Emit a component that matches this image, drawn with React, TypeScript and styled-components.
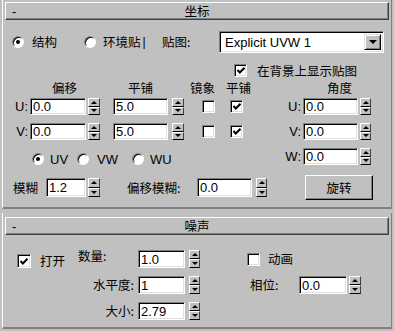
import React from 'react';
import styled, {createGlobalStyle} from 'styled-components';

const GlobalStyle = createGlobalStyle`
    html, body {
        margin: 0;
        padding: 0;
        background: #c0c0c0;
    }
    body {
        width: 394px;
        height: 331px;
        overflow: hidden;
        font-family: "Liberation Sans", "Noto Sans CJK SC", sans-serif;
        font-size: 13px;
        color: #000;
    }
`

const Page = styled.div`
    width: 394px;
    height: 331px;
    padding: 0 2px;
    box-sizing: border-box;
    display: flex;
    flex-direction: column;
`

const Rollout = styled.section<{ $top: number, $gap?: number }>`
    margin-top: ${({$gap}) => $gap || 0}px;
    padding-top: ${({$top}) => $top}px;
    border-left: 1px solid #fff;
    border-right: 1px solid #808080;
    border-bottom: 2px solid #808080;
`

const Header = styled.div`
    margin: 0 2px;
    height: 18px;
    box-sizing: border-box;
    display: grid;
    grid-template-columns: 1fr auto 1fr;
    align-items: center;
    border-top: 1px solid #fff;
    border-left: 1px solid #fff;
    border-right: 1px solid #404040;
    border-bottom: 1px solid #404040;
    box-shadow: inset -1px -1px 0 #808080;

    .minus {
        padding-left: 6px;
        line-height: 1;
    }
`

const Zh = styled.span<{ $w?: number, $align?: string }>`
    font-family: "Noto Sans CJK SC", sans-serif;
    font-size: 12.5px;
    line-height: 12px;
    white-space: nowrap;
    ${({$w}) => $w !== undefined ? `width: ${$w}px; flex: none;` : ''}
    text-align: ${({$align}) => $align || 'left'};
`

const Bar = styled.span`
    font-size: 12px;
    line-height: 12px;
    margin-left: -5px;
`

const Row = styled.div<{ $top?: number, $h: number, $pl?: number }>`
    display: flex;
    align-items: center;
    margin-top: ${({$top}) => $top || 0}px;
    height: ${({$h}) => $h}px;
    padding-left: ${({$pl}) => $pl || 0}px;
`

const Cell = styled.div<{ $w?: number, $align?: string, $pr?: number }>`
    display: flex;
    align-items: center;
    ${({$w}) => $w !== undefined ? `width: ${$w}px; flex: none;` : ''}
    justify-content: ${({$align}) => $align || 'flex-start'};
    padding-right: ${({$pr}) => $pr || 0}px;
    box-sizing: border-box;
    height: 100%;
`

const Option = styled.label<{ $w?: number, $gap: number }>`
    display: flex;
    align-items: center;
    gap: ${({$gap}) => $gap}px;
    ${({$w}) => $w !== undefined ? `width: ${$w}px; flex: none;` : ''}
`

const Radio = styled.span<{ $on?: boolean }>`
    width: 12px;
    height: 12px;
    box-sizing: border-box;
    border-radius: 50%;
    background: #fff;
    border: 1px solid;
    border-color: #808080 #fff #fff #808080;
    box-shadow: inset 1px 1px 0 #000;
    display: inline-flex;
    align-items: center;
    justify-content: center;
    flex: none;

    &::after {
        content: '';
        width: 4px;
        height: 4px;
        border-radius: 50%;
        background: ${({$on}) => $on ? '#000' : 'transparent'};
    }
`

const Box = styled.span<{ $size?: number }>`
    width: ${({$size}) => $size || 13}px;
    height: ${({$size}) => $size || 13}px;
    box-sizing: border-box;
    background: #fff;
    border-top: 1px solid #808080;
    border-left: 1px solid #808080;
    border-bottom: 1px solid #fff;
    border-right: 1px solid #fff;
    box-shadow: inset 1px 1px 0 #000, inset -1px -1px 0 #dfdfdf;
    display: inline-flex;
    align-items: center;
    justify-content: center;
    flex: none;
`

const Check: React.FC<{ on?: boolean, size?: number }> = ({on, size}) => (
    <Box $size={size}>
        {on && (
            <svg width="8" height="7" viewBox="0 0 8 7">
                <polyline points="0.5,3 2.8,5.5 7.5,0.8" fill="none" stroke="#000" strokeWidth="2"/>
            </svg>
        )}
    </Box>
)

const Spin = styled.div<{ $h: number, $gap: number }>`
    display: flex;
    height: ${({$h}) => $h}px;
    gap: ${({$gap}) => $gap}px;
`

const Field = styled.div<{ $w: number }>`
    width: ${({$w}) => $w}px;
    box-sizing: border-box;
    background: #fff;
    border-top: 1px solid #808080;
    border-left: 1px solid #808080;
    border-bottom: 1px solid #fff;
    border-right: 1px solid #fff;
    box-shadow: inset 1px 1px 0 #000, inset -1px -1px 0 #dfdfdf;
    padding-left: 2px;
    display: flex;
    align-items: center;
    font-size: 13px;
    line-height: 1;
`

const Arrows = styled.div<{ $w: number }>`
    width: ${({$w}) => $w}px;
    display: flex;
    flex-direction: column;
`

const ArrowHalf = styled.div<{ $down?: boolean }>`
    flex: 1;
    background: #c0c0c0;
    box-sizing: border-box;
    border-top: 1px solid #fff;
    border-left: 1px solid #fff;
    border-bottom: 1px solid #000;
    border-right: 1px solid #404040;
    display: flex;
    align-items: center;
    justify-content: center;

    &::after {
        content: '';
        border-left: 3px solid transparent;
        border-right: 3px solid transparent;
        ${({$down}) => $down ? 'border-top: 3px solid #000;' : 'border-bottom: 3px solid #000;'}
    }
`

const Spinner: React.FC<{ value: string, w: number, h: number, aw: number, gap: number }> = ({value, w, h, aw, gap}) => (
    <Spin $h={h} $gap={gap}>
        <Field $w={w}>{value}</Field>
        <Arrows $w={aw}>
            <ArrowHalf/>
            <ArrowHalf $down/>
        </Arrows>
    </Spin>
)

const Combo = styled.div`
    width: 165px;
    height: 22px;
    box-sizing: border-box;
    background: #fff;
    border-top: 1px solid #808080;
    border-left: 1px solid #808080;
    border-bottom: 1px solid #fff;
    border-right: 1px solid #fff;
    box-shadow: inset 1px 1px 0 #000, inset -1px -1px 0 #dfdfdf;
    display: flex;
    align-items: center;
    padding: 2px;

    .text {
        flex: 1;
        padding-left: 3px;
    }
`

const ComboButton = styled.div`
    width: 17px;
    height: 100%;
    box-sizing: border-box;
    background: #c0c0c0;
    border-top: 1px solid #dfdfdf;
    border-left: 1px solid #dfdfdf;
    border-bottom: 1px solid #000;
    border-right: 1px solid #000;
    box-shadow: inset 1px 1px 0 #fff, inset -1px -1px 0 #808080;
    display: flex;
    align-items: center;
    justify-content: center;

    &::after {
        content: '';
        border-left: 4px solid transparent;
        border-right: 4px solid transparent;
        border-top: 4px solid #000;
    }
`

const Button = styled.div`
    width: 68px;
    height: 25px;
    box-sizing: border-box;
    border-top: 1px solid #fff;
    border-left: 1px solid #fff;
    border-bottom: 1px solid #000;
    border-right: 1px solid #000;
    box-shadow: inset -1px -1px 0 #808080;
    display: flex;
    align-items: center;
    justify-content: center;
`

const Mid = styled.div`
    display: flex;
    margin-top: 5px;
`

const Column = styled.div<{ $w?: number }>`
    display: flex;
    flex-direction: column;
    ${({$w}) => $w !== undefined ? `width: ${$w}px; flex: none;` : 'flex: 1;'}
`

const Body = styled.div<{ $pb: number }>`
    padding-bottom: ${({$pb}) => $pb}px;
`

const NoiseGrid = styled.div`
    display: grid;
    grid-template-columns: 75px 58px 64px 47px 52px 63px;
    grid-auto-rows: 18px;
    row-gap: 8px;
    margin-top: 15px;
`

const GridCell = styled.div<{ $col: string, $align?: string, $pl?: number, $pr?: number, $self?: string }>`
    grid-column: ${({$col}) => $col};
    display: flex;
    align-items: ${({$self}) => $self || 'center'};
    justify-content: ${({$align}) => $align || 'flex-start'};
    padding-left: ${({$pl}) => $pl || 0}px;
    padding-right: ${({$pr}) => $pr || 0}px;
    gap: 8px;
`

const App: React.FC = () => {
    return (
        <>
            <GlobalStyle/>
            <Page>
                <Rollout $top={2}>
                    <Header>
                        <span className="minus">-</span>
                        <Zh>坐标</Zh>
                        <span/>
                    </Header>
                    <Body $pb={7}>
                        <Row $top={11} $h={22} $pl={9}>
                            <Option $w={72} $gap={8}><Radio $on/><Zh>结构</Zh></Option>
                            <Option $w={78} $gap={7}><Radio/><Zh>环境贴</Zh><Bar>|</Bar></Option>
                            <Zh $w={57}>贴图:</Zh>
                            <Combo>
                                <span className="text">Explicit UVW 1</span>
                                <ComboButton/>
                            </Combo>
                        </Row>
                        <Row $top={11} $h={13} $pl={231}>
                            <Option $gap={10}><Check on/><Zh>在背景上显示贴图</Zh></Option>
                        </Row>
                        <Mid>
                            <Column $w={259}>
                                <Row $h={12} $pl={49}>
                                    <Zh $w={76}>偏移</Zh>
                                    <Zh $w={62}>平铺</Zh>
                                    <Zh $w={36}>镜象</Zh>
                                    <Zh>平铺</Zh>
                                </Row>
                                {['U:', 'V:'].map((axis, i) => (
                                    <Row key={axis} $top={i === 0 ? 4 : 8} $h={17}>
                                        <Cell $w={27} $align="flex-end" $pr={2}>{axis}</Cell>
                                        <Cell $w={83}><Spinner value="0.0" w={56} h={17} aw={12} gap={2}/></Cell>
                                        <Cell $w={89}><Spinner value="5.0" w={55} h={17} aw={12} gap={4}/></Cell>
                                        <Cell $w={28}><Check/></Cell>
                                        <Cell><Check on/></Cell>
                                    </Row>
                                ))}
                                <Row $top={13} $h={12} $pl={29}>
                                    <Option $w={45} $gap={6}><Radio $on/>UV</Option>
                                    <Option $w={55} $gap={8}><Radio/>VW</Option>
                                    <Option $gap={6}><Radio/>WU</Option>
                                </Row>
                            </Column>
                            <Column>
                                <Row $h={12} $pl={65}>
                                    <Zh>角度</Zh>
                                </Row>
                                {['U:', 'V:', 'W:'].map((axis, i) => (
                                    <Row key={axis} $top={i === 0 ? 4 : 8} $h={17}>
                                        <Cell $w={41} $align="flex-end" $pr={2}>{axis}</Cell>
                                        <Spinner value="0.0" w={55} h={17} aw={11} gap={2}/>
                                    </Row>
                                ))}
                            </Column>
                        </Mid>
                        <Row $top={10} $h={25} $pl={10}>
                            <Zh $w={33}>模糊</Zh>
                            <Cell $w={81}><Spinner value="1.2" w={40} h={19} aw={12} gap={2}/></Cell>
                            <Zh $w={70}>偏移模糊:</Zh>
                            <Cell $w={108}><Spinner value="0.0" w={55} h={19} aw={11} gap={4}/></Cell>
                            <Button><Zh>旋转</Zh></Button>
                        </Row>
                    </Body>
                </Rollout>
                <Rollout $top={4} $gap={4}>
                    <Header>
                        <span className="minus">-</span>
                        <Zh>噪声</Zh>
                        <span/>
                    </Header>
                    <Body $pb={7}>
                        <NoiseGrid>
                            <GridCell $col="1" $pl={14} $self="flex-end">
                                <Option $gap={9}><Check on size={14}/><Zh>打开</Zh></Option>
                            </GridCell>
                            <GridCell $col="2" $self="flex-start"><Zh>数量:</Zh></GridCell>
                            <GridCell $col="3" $pl={2}><Spinner value="1.0" w={47} h={18} aw={11} gap={4}/></GridCell>
                            <GridCell $col="5 / span 2"><Option $gap={8}><Check/><Zh>动画</Zh></Option></GridCell>

                            <GridCell $col="2" $align="flex-end" $pr={2}><Zh>水平度:</Zh></GridCell>
                            <GridCell $col="3" $pl={2}><Spinner value="1" w={47} h={18} aw={11} gap={4}/></GridCell>
                            <GridCell $col="5" $pl={3}><Zh>相位:</Zh></GridCell>
                            <GridCell $col="6"><Spinner value="0.0" w={48} h={18} aw={12} gap={2}/></GridCell>

                            <GridCell $col="2" $align="flex-end" $pr={2}><Zh>大小:</Zh></GridCell>
                            <GridCell $col="3" $pl={2}><Spinner value="2.79" w={47} h={18} aw={11} gap={4}/></GridCell>
                        </NoiseGrid>
                    </Body>
                </Rollout>
            </Page>
        </>
    )
};

export default App;
